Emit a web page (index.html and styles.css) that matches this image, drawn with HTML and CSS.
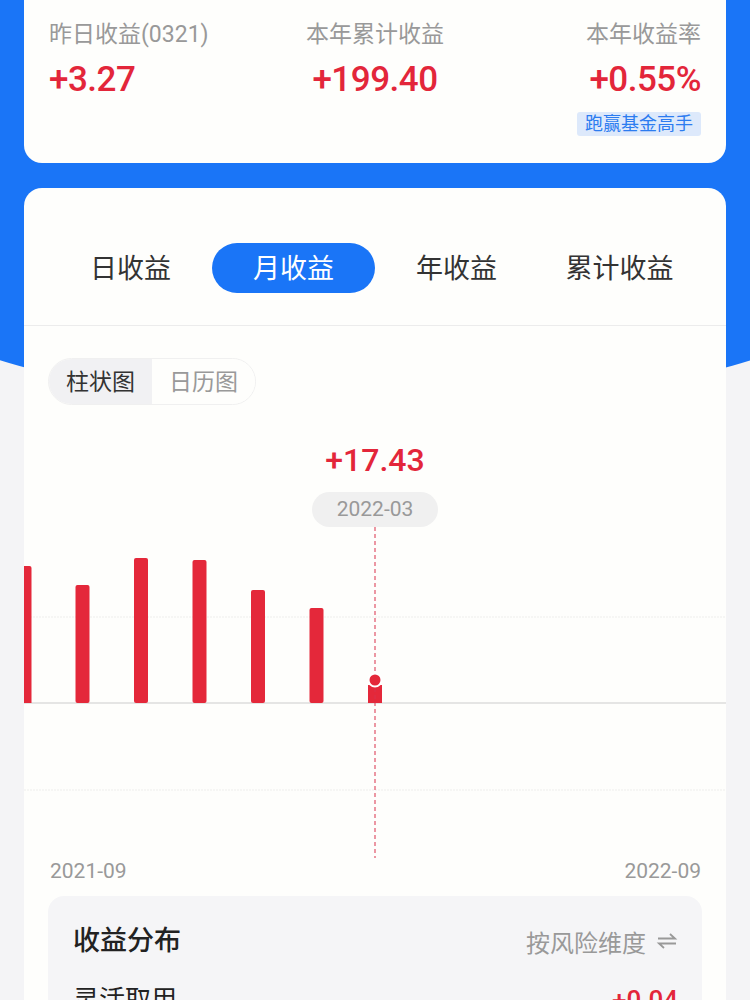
FILE: index.html
```html
<!DOCTYPE html>
<html lang="zh-CN">
<head>
  <meta charset="UTF-8" />
  <title>我的收益</title>
  <meta name="viewport" content="width=device-width, initial-scale=1" />
  <link rel="stylesheet" href="styles.css">
</head>
<body>

  <div class="page">

    <div class="summary">
      <div class="stat">
        <div class="stat-label">昨日收益(0321)</div>
        <div class="stat-value">+3.27</div>
      </div>
      <div class="stat stat-center">
        <div class="stat-label">本年累计收益</div>
        <div class="stat-value">+199.40</div>
      </div>
      <div class="stat stat-right">
        <div class="stat-label">本年收益率</div>
        <div class="stat-value">+0.55%</div>
        <div class="badge">跑赢基金高手</div>
      </div>
    </div>

    <div class="panel">
      <div class="tabs">
        <div class="tab">日收益</div>
        <div class="tab active">月收益</div>
        <div class="tab">年收益</div>
        <div class="tab">累计收益</div>
      </div>

      <div class="chart-head">
        <div class="switch">
          <span class="switch-item on">柱状图</span>
          <span class="switch-item">日历图</span>
        </div>
      </div>

      <div class="chart">
        <div class="tip-value">+17.43</div>
        <div class="tip-date">2022-03</div>
        <svg class="plot" width="702" height="331" viewBox="0 0 702 331">
          <line x1="0" y1="90" x2="702" y2="90" class="grid" />
          <line x1="0" y1="263" x2="702" y2="263" class="grid" />
          <line x1="0" y1="176" x2="702" y2="176" class="axis" />
          <path class="bar" d="M0 39 H5.5 Q7.5 39 7.5 41 V176 H0 Z" />
          <rect class="bar" x="51.5" y="58" width="14" height="118" rx="2" />
          <rect class="bar" x="110" y="31" width="14" height="145" rx="2" />
          <rect class="bar" x="168.5" y="33" width="14" height="143" rx="2" />
          <rect class="bar" x="227" y="63" width="14" height="113" rx="2" />
          <rect class="bar" x="285.5" y="81" width="14" height="95" rx="2" />
          <rect class="bar" x="344" y="158" width="14" height="18" />
          <line x1="351" y1="0" x2="351" y2="331" class="cursor" />
          <circle cx="351" cy="153" r="6.5" class="dot" />
        </svg>
        <div class="range">
          <span>2021-09</span>
          <span>2022-09</span>
        </div>
      </div>

      <div class="dist">
        <div class="dist-head">
          <div class="dist-title">收益分布</div>
          <div class="dist-mode">
            按风险维度
            <svg width="22" height="18" viewBox="0 0 22 18">
              <path d="M2 6.5 H19 L14 2" />
              <path d="M20 11.5 H3 L8 16" />
            </svg>
          </div>
        </div>
        <div class="dist-row">
          <span>灵活取用</span>
          <span class="dist-num">+0.04</span>
        </div>
      </div>
    </div>

  </div>

</body>
</html>
```

FILE: styles.css
```css
html, body {
  margin: 0;
  background: #f4f4f6;
  font-family: Roboto, "Noto Sans CJK SC", sans-serif;
  color: #333;
}
.page {
  position: relative;
  padding: 0 24px;
  height: 1000px;
  overflow: hidden;
}
.page::before {
  content: '';
  position: absolute;
  top: 0;
  left: -25%;
  width: 150%;
  height: 410px;
  background: #1a75f7;
  border-radius: 0 0 50% 50% / 0 0 195px 195px;
}
.summary {
  position: relative;
  margin-top: -20px;
  background: #fefefc;
  border-radius: 18px;
  padding: 40px 25px 27px;
  display: grid;
  grid-template-columns: 1fr 1fr 1fr;
}
.stat {
  display: flex;
  flex-direction: column;
  align-items: flex-start;
}
.stat-center {
  align-items: center;
}
.stat-right {
  align-items: flex-end;
}
.stat-label {
  font-size: 23px;
  line-height: 30px;
  color: #999;
}
.stat-value {
  font-size: 35px;
  line-height: 40px;
  font-weight: 500;
  color: #e3263a;
  margin-top: 10px;
  letter-spacing: -0.5px;
}
.badge {
  margin-top: 12px;
  height: 24px;
  line-height: 24px;
  padding: 0 8px;
  font-size: 18px;
  color: #2c7cf0;
  background: #dde9fb;
  border-radius: 3px;
}
.panel {
  position: relative;
  margin-top: 25px;
  background: #fefefc;
  border-radius: 18px;
  min-height: 900px;
}
.tabs {
  display: grid;
  grid-template-columns: repeat(4, 1fr);
  padding: 55px 25px 32px;
  border-bottom: 1px solid #ececec;
}
.tab {
  height: 50px;
  line-height: 52px;
  text-align: center;
  font-size: 27px;
  color: #333;
  border-radius: 25px;
}
.tab.active {
  background: #1a75f7;
  color: #fff;
}
.chart-head {
  padding: 32px 24px 0;
}
.switch {
  display: inline-flex;
  height: 45px;
  border: 1px solid #f0f0f0;
  border-radius: 24px;
  overflow: hidden;
}
.switch-item {
  width: 103px;
  line-height: 47px;
  text-align: center;
  font-size: 23px;
  color: #999;
  background: #fefefc;
}
.switch-item.on {
  background: #f1f1f3;
  color: #333;
}
.chart {
  display: flex;
  flex-direction: column;
  align-items: center;
}
.tip-value {
  margin-top: 37px;
  font-size: 32px;
  line-height: 36px;
  font-weight: 500;
  color: #e3263a;
}
.tip-date {
  margin-top: 14px;
  width: 126px;
  height: 35px;
  line-height: 35px;
  text-align: center;
  border-radius: 18px;
  background: #f0f0f0;
  color: #999;
  font-size: 21px;
}
.plot {
  display: block;
}
.plot .grid {
  stroke: #eeeeec;
  stroke-width: 1;
  stroke-dasharray: 2 1;
}
.plot .axis {
  stroke: #dddddd;
  stroke-width: 1.5;
}
.plot .bar {
  fill: #e4283a;
}
.plot .cursor {
  stroke: #d9304a;
  stroke-width: 1;
  stroke-dasharray: 4 3;
}
.plot .dot {
  fill: #e4283a;
  stroke: #fff;
  stroke-width: 2;
}
.range {
  align-self: stretch;
  display: flex;
  justify-content: space-between;
  padding: 0 25px 0 26px;
  font-size: 21px;
  line-height: 26px;
  color: #999;
}
.dist {
  margin: 12px 24px 0;
  background: #f5f5f7;
  border-radius: 16px;
  padding: 26px 24px 20px 25px;
}
.dist-head {
  display: flex;
  justify-content: space-between;
  align-items: center;
}
.dist-title {
  font-size: 27px;
  line-height: 38px;
  font-weight: 500;
  color: #222;
}
.dist-mode {
  display: flex;
  align-items: center;
  gap: 10px;
  font-size: 24px;
  color: #999;
}
.dist-mode svg path {
  fill: none;
  stroke: #999;
  stroke-width: 1.8;
}
.dist-row {
  display: flex;
  justify-content: space-between;
  margin-top: 22px;
  font-size: 26px;
  line-height: 36px;
  color: #222;
}
.dist-num {
  color: #e3263a;
  font-weight: 500;
}
```
